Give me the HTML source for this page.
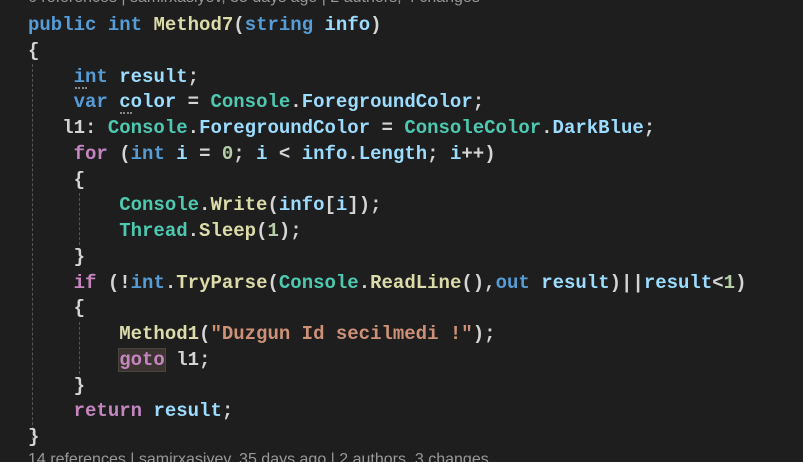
<!DOCTYPE html>
<html><head><meta charset="utf-8"><style>
html,body{margin:0;padding:0;background:#1e1e1e;width:803px;height:462px;overflow:hidden;position:relative}
.l{position:absolute;left:28px;font-family:"Liberation Mono",monospace;font-size:19px;font-weight:bold;line-height:26px;color:#d4d4d4;white-space:pre}
.k{color:#569cd6}.m{color:#dcdcaa}.v{color:#9cdcfe}.c{color:#4ec9b0}.p{color:#c586c0}.s{color:#ce9178}.n{color:#b5cea8}
.lens{position:absolute;left:28px;font-family:"Liberation Sans",sans-serif;font-size:16px;color:#999;white-space:pre}
.g{position:absolute;width:0;border-left:1px dashed #555}
.hl{background:#3b3430;outline:1px solid #4a4540}
.d{position:relative}
.d::after{content:"";position:absolute;left:1px;width:12px;bottom:-1px;border-bottom:2px dotted #888}
</style></head><body>
<div class="lens" style="top:-11px">6 references | samirxasiyev, 35 days ago | 2 authors, 4 changes</div>
<div class="g" style="left:32px;top:64px;height:376px"></div>
<div class="g" style="left:79px;top:193px;height:52px"></div>
<div class="g" style="left:79px;top:322px;height:52px"></div>
<div class="l" style="top:12px"><span class="k">public</span> <span class="k">int</span> <span class="m">Method7</span>(<span class="k">string</span> <span class="v">info</span>)</div>
<div class="l" style="top:38px">{</div>
<div class="l" style="top:64px">    <span class="k d">int</span> <span class="v">result</span>;</div>
<div class="l" style="top:89px">    <span class="k">var</span> <span class="v d">color</span> = <span class="c">Console</span>.<span class="v">ForegroundColor</span>;</div>
<div class="l" style="top:115px">   l1: <span class="c">Console</span>.<span class="v">ForegroundColor</span> = <span class="c">ConsoleColor</span>.<span class="v">DarkBlue</span>;</div>
<div class="l" style="top:141px">    <span class="p">for</span> (<span class="k">int</span> <span class="v">i</span> = <span class="n">0</span>; <span class="v">i</span> &lt; <span class="v">info</span>.<span class="v">Length</span>; <span class="v">i</span>++)</div>
<div class="l" style="top:167px">    {</div>
<div class="l" style="top:192px">        <span class="c">Console</span>.<span class="m">Write</span>(<span class="v">info</span>[<span class="v">i</span>]);</div>
<div class="l" style="top:218px">        <span class="c">Thread</span>.<span class="m">Sleep</span>(<span class="n">1</span>);</div>
<div class="l" style="top:244px">    }</div>
<div class="l" style="top:270px">    <span class="p">if</span> (!<span class="k">int</span>.<span class="m">TryParse</span>(<span class="c">Console</span>.<span class="m">ReadLine</span>(),<span class="k">out</span> <span class="v">result</span>)||<span class="v">result</span>&lt;<span class="n">1</span>)</div>
<div class="l" style="top:295px">    {</div>
<div class="l" style="top:321px">        <span class="m">Method1</span>(<span class="s">"Duzgun Id secilmedi !"</span>);</div>
<div class="l" style="top:347px">        <span class="p hl">goto</span> l1;</div>
<div class="l" style="top:373px">    }</div>
<div class="l" style="top:398px">    <span class="p">return</span> <span class="v">result</span>;</div>
<div class="l" style="top:424px">}</div>
<div class="lens" style="top:451px">14 references | samirxasiyev, 35 days ago | 2 authors, 3 changes</div>
</body></html>
